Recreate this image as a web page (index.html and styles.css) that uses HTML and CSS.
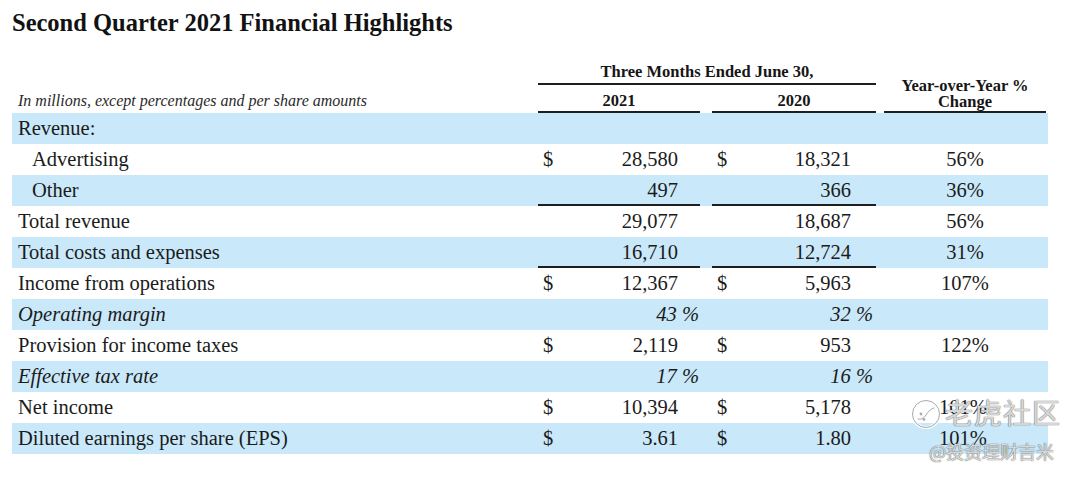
FILE: index.html
```html
<!DOCTYPE html>
<html lang="en">
<head>
<meta charset="utf-8">
<title>Second Quarter 2021 Financial Highlights</title>
<link rel="stylesheet" href="styles.css">
</head>
<body>
<div class="page">
  <h1 class="title">Second Quarter 2021 Financial Highlights</h1>

  <div class="head">
    <div class="h-period">Three Months Ended June 30,</div>
    <div class="h-yoy">Year-over-Year %<br>Change</div>
    <div class="h-note">In millions, except percentages and per share amounts</div>
    <div class="h-y1">2021</div>
    <div class="h-y2">2020</div>
  </div>

  <div class="rows">
    <div class="row shade">
      <div class="label">Revenue:</div>
    </div>
    <div class="row">
      <div class="label indent">Advertising</div>
      <div class="c1"><span class="cur">$</span><span class="num">28,580</span></div>
      <div class="c2"><span class="cur">$</span><span class="num">18,321</span></div>
      <div class="c3">56%</div>
    </div>
    <div class="row shade">
      <div class="label indent">Other</div>
      <div class="c1 rule"><span class="num">497</span></div>
      <div class="c2 rule"><span class="num">366</span></div>
      <div class="c3">36%</div>
    </div>
    <div class="row">
      <div class="label">Total revenue</div>
      <div class="c1"><span class="num">29,077</span></div>
      <div class="c2"><span class="num">18,687</span></div>
      <div class="c3">56%</div>
    </div>
    <div class="row shade">
      <div class="label">Total costs and expenses</div>
      <div class="c1 rule"><span class="num">16,710</span></div>
      <div class="c2 rule"><span class="num">12,724</span></div>
      <div class="c3">31%</div>
    </div>
    <div class="row">
      <div class="label">Income from operations</div>
      <div class="c1"><span class="cur">$</span><span class="num">12,367</span></div>
      <div class="c2"><span class="cur">$</span><span class="num">5,963</span></div>
      <div class="c3">107%</div>
    </div>
    <div class="row shade">
      <div class="label ital">Operating margin</div>
      <div class="c1 pct"><span class="num">43 %</span></div>
      <div class="c2 pct"><span class="num">32 %</span></div>
    </div>
    <div class="row">
      <div class="label">Provision for income taxes</div>
      <div class="c1"><span class="cur">$</span><span class="num">2,119</span></div>
      <div class="c2"><span class="cur">$</span><span class="num">953</span></div>
      <div class="c3">122%</div>
    </div>
    <div class="row shade">
      <div class="label ital">Effective tax rate</div>
      <div class="c1 pct"><span class="num">17 %</span></div>
      <div class="c2 pct"><span class="num">16 %</span></div>
    </div>
    <div class="row">
      <div class="label">Net income</div>
      <div class="c1"><span class="cur">$</span><span class="num">10,394</span></div>
      <div class="c2"><span class="cur">$</span><span class="num">5,178</span></div>
      <div class="c3 yoy-l">101%</div>
    </div>
    <div class="row shade">
      <div class="label">Diluted earnings per share (EPS)</div>
      <div class="c1"><span class="cur">$</span><span class="num">3.61</span></div>
      <div class="c2"><span class="cur">$</span><span class="num">1.80</span></div>
      <div class="c3 yoy-l">101%</div>
    </div>
  </div>

  <div class="watermark">
    <svg class="wm-logo" width="32" height="32" viewBox="0 0 32 32" aria-hidden="true">
      <circle cx="16" cy="16" r="13.5" fill="none" stroke="#ffffff" stroke-width="3.2" opacity="0.85"/>
      <circle cx="16" cy="16" r="13.5" fill="none" stroke="#8c8c8c" stroke-width="1" opacity="0.75"/>
      <path d="M8 21 C11 22 14 20 16 17 C18 14 20 11 24 10" fill="none" stroke="#ffffff" stroke-width="3.2" stroke-linecap="round" opacity="0.85"/>
      <path d="M8 21 C11 22 14 20 16 17 C18 14 20 11 24 10" fill="none" stroke="#8c8c8c" stroke-width="1" stroke-linecap="round" opacity="0.75"/>
      <circle cx="11" cy="16" r="1.4" fill="#909090" opacity="0.75"/>
      <circle cx="14" cy="21.5" r="1.4" fill="#909090" opacity="0.75"/>
    </svg>
    <div class="wm-brand">老虎社区</div>
    <div class="wm-user">@投资理财吉米</div>
  </div>
</div>
</body>
</html>
```

FILE: styles.css
```css
* {
  box-sizing: border-box;
}

html, body {
  margin: 0;
  padding: 0;
  background: #ffffff;
}

body {
  font-family: "Liberation Serif", "Times New Roman", serif;
  color: #1b1b1b;
}

.page {
  position: relative;
  width: 1080px;
  height: 478px;
  padding: 0 12px;
  overflow: hidden;
}

.title {
  margin: 9px 0 0;
  font-size: 24.5px;
  line-height: 28px;
  font-weight: bold;
  color: #121212;
}

.head,
.row {
  display: grid;
  grid-template-columns: 526px 162px 12px 164px 8px 162px 2px;
  width: 1036px;
}

.head {
  grid-template-rows: 48px 28px;
  font-size: 16.5px;
  font-weight: bold;
  color: #161616;
}

.h-period {
  grid-column: 2 / 5;
  grid-row: 1;
  align-self: end;
  text-align: center;
  line-height: 20px;
  padding-bottom: 1px;
  border-bottom: 2px solid #1e1e1e;
}

.h-yoy {
  grid-column: 6;
  grid-row: 1 / 3;
  align-self: end;
  text-align: center;
  line-height: 16px;
  padding-bottom: 1px;
  border-bottom: 2px solid #1e1e1e;
}

.h-note {
  grid-column: 1;
  grid-row: 2;
  padding: 6px 0 0 6px;
  line-height: 20px;
  font-size: 16px;
  font-weight: normal;
  font-style: italic;
  color: #2a2a2a;
}

.h-y1,
.h-y2 {
  grid-row: 2;
  padding-top: 6px;
  line-height: 20px;
  text-align: center;
  border-bottom: 2px solid #1e1e1e;
}

.h-y1 {
  grid-column: 2;
}

.h-y2 {
  grid-column: 4;
}

.row {
  height: 31px;
  font-size: 20.5px;
  line-height: 31px;
}

.row.shade {
  background: #c9e8f9;
}

.label {
  grid-column: 1;
  padding-left: 6px;
  white-space: nowrap;
}

.label.indent {
  padding-left: 20px;
}

.ital {
  font-style: italic;
}

.c1,
.c2 {
  display: flex;
  padding-left: 5px;
  white-space: nowrap;
}

.c1 {
  grid-column: 2;
  padding-right: 22px;
}

.c2 {
  grid-column: 4;
  padding-right: 25px;
}

.num {
  margin-left: auto;
}

.rule {
  box-shadow: inset 0 -2px 0 #1e1e1e;
}

.pct {
  font-style: italic;
  padding-right: 1px;
}

.c2.pct {
  padding-right: 3px;
}

.c3 {
  grid-column: 6;
  text-align: center;
}

.c3.yoy-l {
  padding-right: 4px;
}

.watermark {
  position: absolute;
  left: 908px;
  top: 396px;
  width: 170px;
  height: 74px;
  pointer-events: none;
}

.wm-logo {
  position: absolute;
  left: 2px;
  top: 2px;
}

.wm-brand {
  position: absolute;
  left: 37px;
  top: -2px;
  font-family: "Noto Sans CJK SC", "Noto Sans", sans-serif;
  font-size: 28px;
  line-height: 36px;
  letter-spacing: 1px;
  color: rgba(238, 238, 238, 0.85);
  text-shadow: 0 0 1px rgba(80, 80, 80, 0.9), 0 0 1px rgba(80, 80, 80, 0.7);
}

.wm-user {
  position: absolute;
  left: 21px;
  top: 44px;
  font-family: "Noto Sans CJK SC", "Noto Sans", sans-serif;
  font-size: 18px;
  line-height: 22px;
  color: rgba(240, 240, 240, 0.85);
  text-shadow: 0 0 1px rgba(80, 80, 80, 0.9), 0 0 1px rgba(80, 80, 80, 0.7);
}
```
